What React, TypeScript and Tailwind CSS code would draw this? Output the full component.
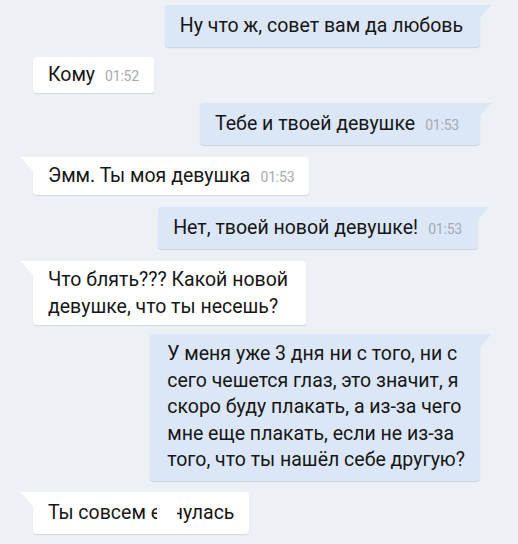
import React from "react";

function Tail({ side, color }: { side: "left" | "right"; color: string }) {
  if (side === "right") {
    return (
      <svg className="absolute top-0 right-[-12px]" width="13" height="14" viewBox="0 0 13 14">
        <path d="M0 0 H12.5 L0 14 Z" fill={color} />
      </svg>
    );
  }
  return (
    <svg className="absolute top-0 left-[-13px]" width="13" height="14" viewBox="0 0 13 14">
      <path d="M13 0 H0.5 L13 14 Z" fill={color} />
    </svg>
  );
}

function Time({ t }: { t: string }) {
  return <span className="ml-[10px] text-[14px] leading-[14px] text-[#a5aab1] tracking-[-0.2px]">{t}</span>;
}

export default function App() {
  const out = "#dbe7f6";
  return (
    <div
      className="w-[518px] h-[544px] overflow-hidden bg-[#edf0f5] flex flex-col text-[19.5px] leading-[26px] text-[#161616]"
      style={{ fontFamily: "Roboto, 'Noto Sans', sans-serif" }}
    >
      {/* 1 */}
      <div className="flex justify-end pr-[38px] mt-[5px]">
        <div className="relative bg-[#dbe7f6] rounded-[4px] rounded-tr-none pl-[15px] pr-[17px] py-[8px] shadow-[0_1px_1px_rgba(100,120,150,0.25)]">
          <Tail side="right" color={out} />
          Ну что ж, совет вам да любовь
        </div>
      </div>
      {/* 2 */}
      <div className="flex justify-start pl-[33px] mt-[10px]">
        <div className="flex items-baseline bg-white rounded-[4px] px-[15px] py-[5px] shadow-[0_1px_1px_rgba(100,120,150,0.2)]">
          Кому
          <Time t="01:52" />
        </div>
      </div>
      {/* 3 */}
      <div className="flex justify-end pr-[38px] mt-[10px]">
        <div className="relative flex items-baseline bg-[#dbe7f6] rounded-[4px] rounded-tr-none pl-[15px] pr-[21px] py-[8px] shadow-[0_1px_1px_rgba(100,120,150,0.25)]">
          <Tail side="right" color={out} />
          Тебе и твоей девушке
          <Time t="01:53" />
        </div>
      </div>
      {/* 4 */}
      <div className="flex justify-start pl-[33px] mt-[12px]">
        <div className="relative flex items-baseline bg-white rounded-[4px] rounded-tl-none px-[15px] py-[6px] shadow-[0_1px_1px_rgba(100,120,150,0.2)]">
          <Tail side="left" color="#ffffff" />
          Эмм. Ты моя девушка
          <Time t="01:53" />
        </div>
      </div>
      {/* 5 */}
      <div className="flex justify-end pr-[40px] mt-[12px]">
        <div className="relative flex items-baseline bg-[#dbe7f6] rounded-[4px] rounded-tr-none pl-[15px] pr-[16px] py-[8px] shadow-[0_1px_1px_rgba(100,120,150,0.25)]">
          <Tail side="right" color={out} />
          Нет, твоей новой девушке!
          <Time t="01:53" />
        </div>
      </div>
      {/* 6 */}
      <div className="flex justify-start pl-[33px] mt-[12px]">
        <div className="relative bg-white rounded-[4px] rounded-tl-none pl-[15px] pr-[18px] py-[5px] leading-[27px] shadow-[0_1px_1px_rgba(100,120,150,0.2)]">
          <Tail side="left" color="#ffffff" />
          Что блять??? Какой новой
          <br />
          девушке, что ты несешь?
        </div>
      </div>
      {/* 7 */}
      <div className="flex justify-end pr-[38px] mt-[9px]">
        <div className="relative bg-[#dbe7f6] rounded-[4px] rounded-tr-none pl-[17px] pr-[15px] py-[7px] leading-[26.6px] shadow-[0_1px_1px_rgba(100,120,150,0.25)]">
          <Tail side="right" color={out} />
          У меня уже 3 дня ни с того, ни с
          <br />
          сего чешется глаз, это значит, я
          <br />
          скоро буду плакать, а из-за чего
          <br />
          мне еще плакать, если не из-за
          <br />
          того, что ты нашёл себе другую?
        </div>
      </div>
      {/* 8 */}
      <div className="flex justify-start pl-[33px] mt-[11px]">
        <div className="relative bg-white rounded-[4px] rounded-tl-none px-[15px] py-[8px] shadow-[0_1px_1px_rgba(100,120,150,0.2)]">
          <Tail side="left" color="#ffffff" />
          Ты совсем{" "}
          <span className="relative">
            ебн
            <span className="absolute top-[2px] bottom-[2px] left-[6px] w-[20px] bg-white" />
          </span>
          улась
        </div>
      </div>
    </div>
  );
}
